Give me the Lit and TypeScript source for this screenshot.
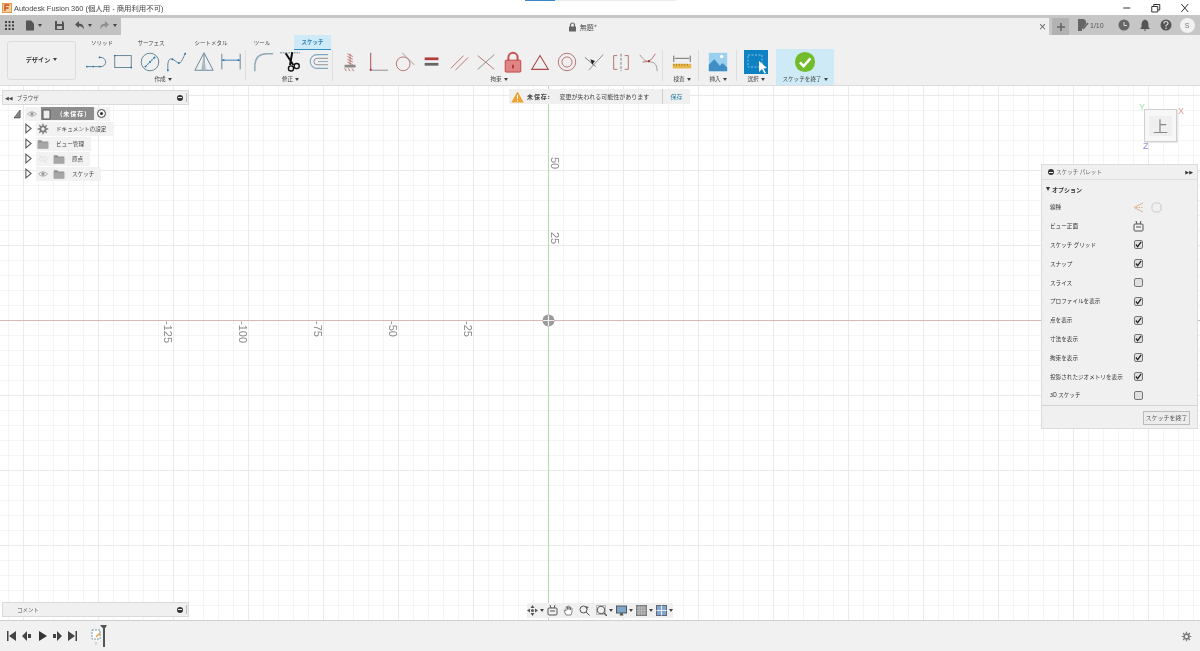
import { LitElement, html, css, svg } from "lit";
import { customElement } from "lit/decorators.js";

const B = "#5d7f92";
const D = "#2b78b5";
const R = "#b56a6a";
const dot = (x: number, y: number, c = D) => svg`<circle cx=${x} cy=${y} r="1" fill=${c} stroke="none"/>`;

const createIcons = [
  svg`<path d="M2 17H17.5a5 5 0 0 0 0-10H15" fill="none" stroke=${B}/>${dot(2, 17)}${dot(9, 17)}${dot(16, 17)}${dot(16, 7)}`,
  svg`<rect x="3" y="5" width="18" height="13" fill="none" stroke=${B}/>${dot(3, 5)}${dot(21, 18)}`,
  svg`<circle cx="12" cy="12" r="9.6" fill="none" stroke=${B}/><path d="M7 17L17 7" stroke=${D} stroke-width="1.2" stroke-dasharray="2 1"/>${dot(7, 17)}${dot(12, 12)}${dot(17, 7)}`,
  svg`<path d="M2 22V14Q3 7 7 9T13 13 18 9 21 2" fill="none" stroke=${B}/>${dot(2, 21)}${dot(7, 9)}${dot(14, 13)}${dot(21, 3)}`,
  svg`<path d="M12 2L2 21H22Z M12 2V21" fill="none" stroke=${B}/><path d="M12 2L14 21H9Z" fill="#a9b9c2"/>`,
  svg`<path d="M2 3V20M22 3V20" stroke=${B} fill="none"/><path d="M2 10H22" stroke=${D}/>${dot(4, 10)}${dot(20, 10)}`,
];
const modifyIcons = [
  svg`<path d="M2 22V15Q3 3 15 3H22" fill="none" stroke="#8fa9b8" stroke-width="1.6"/>`,
  svg`<path d="M0 2H22" stroke=${B} stroke-dasharray="2 1"/><path d="M6.200 2.500L14.500 15.300M13.400 1.400L10.900 15.300" stroke="#111" stroke-width="2.200"/><circle cx="12" cy="19" r="2.800" fill="none" stroke="#111" stroke-width="1.500"/><circle cx="18.200" cy="16.400" r="2.800" fill="none" stroke="#111" stroke-width="1.500"/>`,
  svg`<path d="M23 4H11a7.5 7.5 0 0 0 0 15H23" fill="none" stroke="#7fa9c0" stroke-width="1.2"/><path d="M23 8H11a3.5 3.5 0 0 0 0 7H23" fill="none" stroke="#8a8a8a"/><path d="M23 11.500H12" stroke="#7fa9c0"/>`,
];
const constraintIcons = [
  svg`<path d="M8 3L14 6M8 6L14 9M8 9L14 12M8 12L14 15M11 3V17" stroke=${R} fill="none" stroke-width=".9"/><rect x="5" y="15" width="12" height="3" fill="#8a8a8a"/><path d="M5 19L7 22M9 19L11 22M13 19L15 22" stroke=${R}/>`,
  svg`<path d="M4 2V21" stroke=${R} stroke-width="1.3"/><path d="M4 21H23" stroke="#a0a0a0" stroke-width="1.3"/><rect x="3" y="19.500" width="2" height="2" fill="#b33"/>`,
  svg`<circle cx="10" cy="14" r="7.500" fill="none" stroke=${R}/><path d="M9 2L22 15" stroke="#999"/>`,
  svg`<rect x="4" y="7" width="15" height="3" fill="#b23c3c"/><rect x="4" y="13" width="15" height="3" fill="#666"/>`,
  svg`<path d="M3 19L17 5M8 21L22 7" stroke=${R} fill="none"/>`,
  svg`<path d="M3 5L21 20" stroke=${R}/><path d="M3 20L21 4" stroke="#888"/>`,
  svg`<path d="M7 11V7a5 5 0 0 1 10 0V11" fill="none" stroke="#c85050" stroke-width="2.200"/><rect x="3.500" y="10" width="17" height="13" rx="1" fill="#e08585" stroke="#c04040"/><rect x="11" y="15" width="2" height="4" fill="#b33"/>`,
  svg`<path d="M12 5L21 20H3Z" fill="none" stroke="#a84a4a" stroke-width="1.2"/>`,
  svg`<circle cx="12" cy="12" r="9.500" fill="none" stroke=${R}/><circle cx="12" cy="12" r="5.500" fill="none" stroke=${R}/>`,
  svg`<path d="M6 21L22 4" stroke="#888"/><path d="M2 7L14 17" stroke="#777"/><path d="M8 9L13 11L10 15Z" fill="#222"/>`,
  svg`<path d="M8 5H4V20H8M16 5H20V20H16" fill="none" stroke=${R}/><path d="M12 3V22" stroke="#777" stroke-dasharray="3 1.500"/>`,
  svg`<path d="M3 4Q8 12 15 12T22 22" fill="none" stroke="#999"/><path d="M6 12Q10 12 13 11T20 3" fill="none" stroke=${R}/><circle cx="13" cy="11" r="1.300" fill="#a33"/>`,
];
const inspectIcon = svg`<path d="M3 5V12M21 5V12M4 8H20" stroke="#666"/><rect x="2" y="14" width="20" height="5" fill="#e8b84a"/><path d="M3 14V16M6 14V16M9 14V16M12 14V16M15 14V16M18 14V16" stroke="#9a7a20"/>`;
const insertIcon = svg`<rect x="2" y="2" width="20" height="20" fill="#9cd0ef"/><path d="M2 22V15L8 9L14 16L17 13L22 18V22Z" fill="#3f8fc6"/><circle cx="16" cy="6" r="1.800" fill="#fff"/>`;
const selectIcon = svg`<rect x="0" y="0" width="24" height="24" fill="#0f82c4"/><rect x="4" y="5" width="14" height="12" fill="none" stroke="#9fd4ef" stroke-dasharray="2 1.500" stroke-width=".8"/><path d="M15 11V22L18 19L20.500 23.500L22 23L19.500 18.500L23 18Z" fill="#fff"/>`;
const finishIcon = svg`<circle cx="12" cy="12" r="11" fill="#72bb2a"/><path d="M6.500 12.500L10.500 16.500L18 8" fill="none" stroke="#fff" stroke-width="2.800"/>`;

const ICON = (body: unknown, cls = "") => html`<svg class="ico ${cls}" viewBox="0 0 24 24">${body}</svg>`;

const caret = html`<span class="caret"></span>`;

const eye = svg`<path d="M2 8Q8 2 14 8Q8 14 2 8Z" fill="none" stroke="#999"/><circle cx="8" cy="8" r="2.200" fill="#999"/>`;
const eyeOff = svg`<path d="M2 8Q8 2 14 8Q8 14 2 8Z M3 3L13 13" fill="none" stroke="#ddd"/>`;
const folder = svg`<path d="M1 3H6L7 4.500H15V14H1Z" fill="#8f8f8f"/><rect x="1" y="6" width="14" height="8" fill="#a6a6a6"/>`;
const gear = svg`<circle cx="8" cy="8" r="3.500" fill="none" stroke="#7d7d7d" stroke-width="2.400"/><path d="M8 1V4M8 12V15M1 8H4M12 8H15M3 3L5 5M11 11L13 13M13 3L11 5M5 11L3 13" stroke="#7d7d7d" stroke-width="1.800"/>`;
const tri = html`<svg class="tri" viewBox="0 0 8 12"><path d="M1 1L7 6L1 11Z" fill="#fff" stroke="#555" stroke-width="1.200"/></svg>`;
const s16 = (b: unknown, cls = "i16") => html`<svg class=${cls} viewBox="0 0 16 16">${b}</svg>`;

const paletteRows: [string, boolean][] = [
  ["スケッチ グリッド", true],
  ["スナップ", true],
  ["スライス", false],
  ["プロファイルを表示", true],
  ["点を表示", true],
  ["寸法を表示", true],
  ["拘束を表示", true],
  ["投影されたジオメトリを表示", true],
  ["3D スケッチ", false],
];

const xLabels: [string, string][] = [["-125", "a"], ["-100", "b"], ["-75", "c"], ["-50", "d"], ["-25", "e"]];

@customElement("app-root")
export class AppRoot extends LitElement {
  static styles = css`
    :host { display: flex; flex-direction: column; width: 1200px; height: 651px; overflow: hidden; background: #fff;
      font-family: "Noto Sans CJK JP", "Liberation Sans", sans-serif; color: #333; font-size: 6px; filter: blur(.3px); }
    svg { display: block; }
    .title { height: 15px; flex: none; display: flex; align-items: center; position: relative; background: #fff; padding-left: 2px; }
    .progress { position: absolute; left: 525px; top: 0; width: 151px; height: 1px; background: #ececec; }
    .progress i { display: block; width: 30px; height: 1px; background: #3a86c4; }
    .logo { width: 10px; height: 10px; margin-right: 2px; }
    .title .t { font-size: 7.400px; color: #444; font-family: "Liberation Sans", "Noto Sans CJK JP", sans-serif; white-space: nowrap; }
    .win { margin-left: auto; display: flex; margin-right: 2px; }
    .win svg { width: 28.500px; height: 12px; }
    .tabs { height: 20px; flex: none; background: #c6c6c6; display: flex; align-items: stretch; }
    .qa { width: 121px; flex: none; display: flex; align-items: center; padding-left: 4px; box-sizing: border-box; background: #c2c2c2; }
    .qa svg { flex: none; width: 11px; height: 11px; }
    .qa .q1 { margin-right: 9px; }
    .qa .q3 { margin-left: 11.500px; }
    .qa .q4 { margin-left: 9px; }
    .qa .q5 { margin-left: 7px; opacity: .45; }
    .qa .caret { margin-left: 3px; }
    .doc { width: 928px; flex: none; margin-top: 3px; background: #f0f0f0; display: flex; align-items: center; justify-content: center; position: relative; font-size: 7px; color: #555; gap: 3px; padding-right: 5px; box-sizing: border-box; }
    .doc svg { width: 9px; height: 10px; }
    .close { position: absolute; right: 3px; top: 3px; font-size: 12px; line-height: 12px; color: #666; font-family: "Liberation Sans", sans-serif; }
    .rt { flex: 1; display: flex; align-items: center; background: #c6c6c6; position: relative; }
    .plus { width: 17px; height: 17px; margin: 3px 0 0 3px; background: #b2b2b2; display: flex; align-items: center; justify-content: center; align-self: flex-start; }
    .plus svg { width: 10px; height: 10px; }
    .rt .lim { margin-left: 8px; display: flex; align-items: center; gap: 1px; font-size: 7px; color: #555; font-family: "Liberation Sans", sans-serif; }
    .rt .lim svg { width: 12px; height: 12px; }
    .rt .ic { width: 12px; height: 12px; margin-left: 9px; }
    .rt .ic.first { margin-left: 14px; }
    .avatar { width: 15px; height: 15px; border-radius: 50%; background: #f2f2f2; margin-left: 8px; font-size: 7px; display: flex; align-items: center; justify-content: center; color: #777; font-family: "Liberation Sans", sans-serif; }

    .ribbon { height: 51px; flex: none; background: #f0f0f0; display: flex; border-bottom: 1px solid #dcdcdc; box-sizing: border-box; }
    .design { width: 69px; height: 39px; margin: 6px 6px 0 7px; flex: none; box-sizing: border-box; border: 1px solid #dcdcdc; border-radius: 3px; background: #f0f0f0; display: flex; align-items: center; justify-content: center; font-size: 6.200px; font-weight: 700; gap: 3px; color: #333; padding-bottom: 2px; }
    .rcol { flex: 1; display: flex; flex-direction: column; min-width: 0; }
    .rtabs { height: 15px; display: flex; flex: none; }
    .rtab { display: flex; align-items: center; justify-content: center; font-size: 5.500px; color: #444; box-sizing: border-box; }
    .w40 { width: 40px; } .w58 { width: 58px; } .w62 { width: 62px; }
    .rtab.on { width: 37px; margin-left: 12px; background: #cdeaf6; border-bottom: 1px solid #2f8fc0; color: #2a7fb5; font-weight: 700; }
    .groups { flex: 1; display: flex; min-height: 0; }
    .grp { display: flex; flex-direction: column; align-items: center; position: relative; padding-right: 2px; margin-right: 4px; }
    .grp::after { content: ""; position: absolute; right: 0; top: 0; bottom: 4px; width: 1px; background: #dedede; }
    .grp.nosep::after { display: none; }
    .grp.p4 { padding-right: 4px; }
    .cells { display: flex; height: 24px; align-items: center; }
    .cell { width: 27px; height: 24px; display: flex; align-items: center; justify-content: center; flex: none; }
    .cell.w30 { width: 30px; }
    .ico { width: 22px; height: 22px; overflow: visible; flex: none; }
    .lab { display: flex; align-items: center; gap: 2px; font-size: 5.600px; color: #444; height: 11px; line-height: 11px; white-space: nowrap; }
    .caret { display: inline-block; width: 0; height: 0; border-left: 2px solid transparent; border-right: 2px solid transparent; border-top: 3px solid #444; flex: none; }
    .finish { width: 58px; background: #cdeaf6; margin-left: 1px; display: flex; flex-direction: column; align-items: center; margin-top: -1px; padding-top: 1px; }
    .sel { margin-right: 2px; }
    .sel .ico { width: 24px; height: 24px; }

    .canvas { flex: 1; position: relative; min-height: 0; overflow: hidden; background-color: #fff;
      background-image:
        linear-gradient(to right, #eaeaea 1px, transparent 1px),
        linear-gradient(to bottom, #eaeaea 1px, transparent 1px),
        linear-gradient(to right, #f4f4f4 1px, transparent 1px),
        linear-gradient(to bottom, #f4f4f4 1px, transparent 1px);
      background-size: 75px 75px, 75px 75px, 15px 15px, 15px 15px;
      background-position: 23px 0, 0 9px, 8px 0, 0 9px; }
    .axis-y { position: absolute; left: 548px; top: 0; bottom: 0; width: 1px; background: #b4dcae; }
    .axis-x { position: absolute; left: 0; right: 0; top: 234px; height: 1px; background: #dcb6b6; }
    .origin { position: absolute; left: 542px; top: 228px; width: 13px; height: 13px; }
    .num { position: absolute; writing-mode: vertical-rl; font-family: "Liberation Sans", sans-serif; font-size: 11px; line-height: 11px; color: #8a8a8a; }
    .a { left: 162px; top: 235px; } .b { left: 237px; top: 235px; } .c { left: 312px; top: 235px; } .d { left: 387px; top: 235px; } .e { left: 462px; top: 235px; }
    .y50 { left: 549px; top: 71px; } .y25 { left: 549px; top: 146px; }
    .panel { position: absolute; left: 2px; width: 187px; height: 15px; background: #f0f0f0; border: 1px solid #dadada; box-sizing: border-box; display: flex; align-items: center; font-size: 5.500px; color: #555; }
    .panel::after { content: ""; width: 1px; height: 9px; background: #bbb; margin-right: 1px; }
    .p-b { top: 4px; } .p-c { bottom: 3px; }
    .panel .nav { font-size: 5px; margin: 0 4px 0 2px; color: #444; font-family: "DejaVu Sans", sans-serif; }
    .panel .cm { margin-left: 14px; }
    .pin { margin-left: auto; margin-right: 3px; width: 6px; height: 6px; border-radius: 50%; background: #333; position: relative; }
    .pin::after { content: ""; position: absolute; left: 1px; top: 2.500px; width: 4px; height: 1px; background: #eee; }
    .tree { position: absolute; left: 13px; top: 20px; display: flex; flex-direction: column; }
    .row { height: 15px; display: flex; align-items: center; }
    .row.child { padding-left: 11px; }
    .tw { width: 8px; display: flex; justify-content: center; margin-right: 4px; flex: none; }
    .tri { width: 7px; height: 11px; flex: none; }
    .chip { display: flex; align-items: center; height: 14px; background: #f2f2f2; font-size: 5.600px; color: #444; gap: 2px; }
    .i16 { width: 12px; height: 12px; flex: none; }
    .chip .slot { width: 14px; display: flex; justify-content: center; flex: none; }
    .chip .tx { margin: 0 7px 0 4px; white-space: nowrap; }
    .root { padding-right: 4px; gap: 0; }
    .rootbar { width: 53px; height: 13px; background: #8d8d8d; color: #fff; font-weight: 700; display: flex; align-items: center; gap: 7px; margin: 0 3px 0 2px; font-size: 6px; letter-spacing: 1px; }
    .rootbar svg { width: 12px; height: 12px; flex: none; }
    .radio { width: 9px; height: 9px; border: 1px solid #444; border-radius: 50%; box-sizing: border-box; display: flex; align-items: center; justify-content: center; }
    .radio i { width: 3px; height: 3px; background: #333; border-radius: 50%; }
    .cube { position: absolute; left: 1144px; top: 23px; width: 33px; height: 33px; box-sizing: border-box; border: 1px solid #cfcfcf; background: #f7f7f7; display: flex; align-items: center; justify-content: center; box-shadow: 1px 1px 1px #e8e8e8; }
    .cube span { width: 23px; height: 20px; background: #efefef; font-size: 15px; line-height: 20px; text-align: center; color: #888; }
    .ax { position: absolute; font-family: "Liberation Sans", sans-serif; font-size: 9px; line-height: 9px; }
    .ax-y { left: 1139px; top: 17px; color: #a8e0a8; }
    .ax-x { left: 1178px; top: 21px; color: #e59a9a; }
    .ax-z { left: 1143px; top: 56px; color: #8f8fd8; }
    .warn { position: absolute; left: 509px; top: 3px; width: 181px; height: 15px; background: #f0f0f0; display: flex; align-items: center; font-size: 6px; color: #444; }
    .warn svg { width: 13px; height: 12px; margin-left: 2px; flex: none; }
    .warn b { margin-left: 3px; letter-spacing: .9px; white-space: nowrap; }
    .warn .msg { margin-left: 9px; white-space: nowrap; }
    .warn .save { margin-left: auto; width: 28px; height: 15px; box-sizing: border-box; border-left: 1px solid #ccc; color: #2a7fa8; display: flex; align-items: center; justify-content: center; flex: none; }
    .palette { position: absolute; left: 1041px; top: 78px; width: 157px; height: 265px; box-sizing: border-box; background: #f0f0f0; border: 1px solid #dcdcdc; display: flex; flex-direction: column; color: #333; font-size: 5.600px; }
    .ph { height: 14px; flex: none; display: flex; align-items: center; padding: 0 4px 0 6px; border-bottom: 1px solid #dedede; color: #666; gap: 0; }
    .ph .pin { margin: 0 2px 0 0; flex: none; }
    .ph .ff { margin-left: auto; font-size: 5px; font-family: "DejaVu Sans", sans-serif; color: #333; }
    .po { height: 18px; flex: none; display: flex; align-items: center; padding-left: 4px; font-weight: 700; gap: 2px; font-size: 6px; color: #333; box-sizing: border-box; }
    .po i { width: 0; height: 0; border-left: 2.500px solid transparent; border-right: 2.500px solid transparent; border-top: 4px solid #333; }
    .pr { height: 18.800px; display: flex; align-items: center; padding-left: 8px; flex: none; }
    .pr .nm { width: 83px; white-space: nowrap; flex: none; }
    .pr .v { display: flex; gap: 7px; align-items: center; }
    .pr .v svg { width: 11px; height: 11px; }
    .chk { width: 9px; height: 9px; box-sizing: border-box; border: 1px solid #777; border-radius: 2px; background: #e0e0e0; display: flex; align-items: center; justify-content: center; margin-left: 1px; }
    .chk svg { width: 7px !important; height: 7px !important; }
    .pf { margin-top: auto; height: 24px; flex: none; border-top: 1px solid #d4d4d4; display: flex; align-items: center; justify-content: flex-end; padding-right: 7px; }
    .pf span { width: 47px; height: 14px; box-sizing: border-box; border: 1px solid #bbb; background: #ececec; display: flex; align-items: center; justify-content: center; font-size: 6px; color: #555; white-space: nowrap; }
    .navbar { position: absolute; left: 527px; top: 517px; width: 146px; height: 15px; background: #f0f0f0; display: flex; align-items: center; box-sizing: border-box; }
    .navbar svg { width: 11px; height: 11px; flex: none; margin-left: 3px; }
    .navbar svg.n0 { margin-left: 0; }
    .navbar svg.n5 { margin-left: 5px; }
    .navbar svg.n6 { margin-left: 6px; }
    .navbar .caret { margin-left: 2px; }
    .timeline { height: 31px; flex: none; box-sizing: border-box; border-top: 1px solid #cfcfcf; background: #f1f1f1; display: flex; align-items: center; padding: 0 8px 0 7px; }
    .timeline .tb { width: 9px; height: 10px; margin-right: 6.250px; flex: none; }
    .feat { width: 16px; height: 22px; margin-left: 8px; flex: none; }
    .tgear { margin-left: auto; width: 11px; height: 11px; }
  `;

  render() {
    const group = (icons: unknown[], label: string) => html`<div class="grp">
      <div class="cells">${icons.map((i) => html`<div class="cell">${ICON(i)}</div>`)}</div>
      <div class="lab">${label}${caret}</div>
    </div>`;
    const check = svg`<path d="M1 4L3 6.500L7 1" fill="none" stroke="#222" stroke-width="1.400"/>`;
    return html`
      <div class="title">
        <div class="progress"><i></i></div>
        <svg class="logo" viewBox="0 0 10 10"><rect x=".5" y=".5" width="9" height="9" fill="#f6cfa0" stroke="#e39a4a"/><path d="M3 8V2H7.500M3 5H6.500" fill="none" stroke="#c8501e" stroke-width="1.400"/></svg>
        <span class="t">Autodesk Fusion 360 (個人用 - 商用利用不可)</span>
        <div class="win">
          <svg viewBox="0 0 28 12"><path d="M10 6H17" stroke="#333"/></svg>
          <svg viewBox="0 0 28 12"><path d="M10.500 4.500H16.500V10H10.500Z M12.500 4.500V2.500H18.500V8H16.500" fill="none" stroke="#333"/></svg>
          <svg viewBox="0 0 28 12"><path d="M11 2L18 10M18 2L11 10" stroke="#333"/></svg>
        </div>
      </div>
      <div class="tabs">
        <div class="qa">
          <svg class="q1" viewBox="0 0 11 11"><path d="M1 1H3V3H1ZM4.500 1H6.500V3H4.500ZM8 1H10V3H8ZM1 4.500H3V6.500H1ZM4.500 4.500H6.500V6.500H4.500ZM8 4.500H10V6.500H8ZM1 8H3V10H1ZM4.500 8H6.500V10H4.500ZM8 8H10V10H8Z" fill="#444"/></svg>
          <svg class="q2" viewBox="0 0 11 11"><path d="M2 .5H7L10 3.500V10.500H2Z" fill="#555"/></svg>${caret}
          <svg class="q3" viewBox="0 0 11 11"><path d="M1 1H8.500L10 2.500V10H1Z" fill="#555"/><rect x="3" y="1" width="5" height="3" fill="#c2c2c2"/><rect x="3" y="6" width="5" height="3" fill="#c2c2c2"/></svg>
          <svg class="q4" viewBox="0 0 11 11"><path d="M1 4.500L5 1V3.500Q10 3.500 10 9.500Q8.500 6 5 6V8Z" fill="#555"/></svg>${caret}
          <svg class="q5" viewBox="0 0 11 11"><path d="M10 4.500L6 1V3.500Q1 3.500 1 9.500Q2.500 6 6 6V8Z" fill="#555"/></svg>${caret}
        </div>
        <div class="doc">
          <svg viewBox="0 0 9 10"><path d="M2.500 5V3a2 2 0 0 1 4 0V5" fill="none" stroke="#666" stroke-width="1.200"/><rect x="1" y="4.500" width="7" height="5" rx=".5" fill="#666"/></svg>
          <span>無題*</span>
          <span class="close">×</span>
        </div>
        <div class="rt">
          <div class="plus"><svg viewBox="0 0 10 10"><path d="M5 1V9M1 5H9" stroke="#666" stroke-width="1.600"/></svg></div>
          <div class="lim"><svg viewBox="0 0 12 12"><path d="M1 0H7L9 2V5L5 10V12H1Z" fill="#666"/><path d="M6 10L11 4" stroke="#666" stroke-width="1.600"/></svg>1/10</div>
          <svg class="ic first" viewBox="0 0 12 12"><circle cx="6" cy="6" r="5.500" fill="#666"/><path d="M6 3V6.500H9" stroke="#ddd" fill="none"/></svg>
          <svg class="ic" viewBox="0 0 12 12"><path d="M6 .5Q9.500 1.500 9.500 5.500V8L11 10H1L2.500 8V5.500Q2.500 1.500 6 .5ZM4.500 10.500H7.500L6 12Z" fill="#555"/></svg>
          <svg class="ic" viewBox="0 0 12 12"><circle cx="6" cy="6" r="5.500" fill="#555"/><path d="M4 4.500Q4 2.500 6 2.500T8 4.500Q8 5.500 6 6.500V7.500M6 8.500V10" stroke="#ddd" fill="none" stroke-width="1.200"/></svg>
          <div class="avatar">S</div>
        </div>
      </div>
      <div class="ribbon">
        <div class="design">デザイン ${caret}</div>
        <div class="rcol">
          <div class="rtabs">
            <div class="rtab w40">ソリッド</div><div class="rtab w58">サーフェス</div><div class="rtab w62">シートメタル</div><div class="rtab w40">ツール</div><div class="rtab on">スケッチ</div>
          </div>
          <div class="groups">
            ${group(createIcons, "作成")}
            ${group(modifyIcons, "修正")}
            ${group(constraintIcons, "拘束")}
            <div class="grp"><div class="cells"><div class="cell w30">${ICON(inspectIcon)}</div></div><div class="lab">検査${caret}</div></div>
            <div class="grp p4"><div class="cells"><div class="cell w30">${ICON(insertIcon)}</div></div><div class="lab">挿入${caret}</div></div>
            <div class="grp nosep sel"><div class="cells"><div class="cell w30">${ICON(selectIcon)}</div></div><div class="lab">選択${caret}</div></div>
            <div class="finish"><div class="cells"><div class="cell">${ICON(finishIcon)}</div></div><div class="lab">スケッチを終了${caret}</div></div>
          </div>
        </div>
      </div>
      <div class="canvas">
        <div class="axis-y"></div>
        <div class="axis-x"></div>
        <svg class="origin" viewBox="0 0 13 13"><circle cx="6.500" cy="6.500" r="6" fill="#9a9a9a"/><path d="M6.500 1V12M1 6.500H12" stroke="#eee" stroke-width="1.200"/></svg>
        ${xLabels.map(([t, c]) => html`<span class="num ${c}">${t}</span>`)}
        <span class="num y50">50</span>
        <span class="num y25">25</span>

        <div class="panel p-b"><span class="nav">◀◀</span>ブラウザ<span class="pin"></span></div>
        <div class="tree">
          <div class="row">
            <div class="tw"><svg class="tri" viewBox="0 0 8 12"><path d="M7 2V11H0Z" fill="#888" stroke="#444" stroke-width=".8"/></svg></div>
            <div class="chip root">
              <div class="slot">${s16(eye)}</div>
              <div class="rootbar"><svg viewBox="0 0 12 12"><path d="M2 2H9V11H2Z" fill="#eee" stroke="#555"/></svg>(未保存)</div>
              <div class="radio"><i></i></div>
            </div>
          </div>
          <div class="row child"><div class="tw">${tri}</div><div class="chip"><div class="slot">${s16(gear)}</div><span class="tx">ドキュメントの設定</span></div></div>
          <div class="row child"><div class="tw">${tri}</div><div class="chip"><div class="slot">${s16(folder)}</div><span class="tx">ビュー管理</span></div></div>
          <div class="row child"><div class="tw">${tri}</div><div class="chip"><div class="slot">${s16(eyeOff)}</div><div class="slot">${s16(folder)}</div><span class="tx">原点</span></div></div>
          <div class="row child"><div class="tw">${tri}</div><div class="chip"><div class="slot">${s16(eye)}</div><div class="slot">${s16(folder)}</div><span class="tx">スケッチ</span></div></div>
        </div>
        <div class="panel p-c"><span class="cm">コメント</span><span class="pin"></span></div>

        <div class="warn">
          <svg viewBox="0 0 13 12"><path d="M6.500 .5L12.800 11.500H.2Z" fill="#eda32f"/><path d="M6.500 4V8M6.500 9V10.500" stroke="#fff"/></svg>
          <b>未保存:</b><span class="msg">変更が失われる可能性があります</span><span class="save">保存</span>
        </div>

        <span class="ax ax-y">Y</span><span class="ax ax-x">X</span><span class="ax ax-z">Z</span>
        <div class="cube"><span>上</span></div>

        <div class="palette">
          <div class="ph"><span class="pin"></span>スケッチ パレット<span class="ff">▶▶</span></div>
          <div class="po"><i></i>オプション</div>
          <div class="pr"><span class="nm">線種</span><div class="v">
            <svg viewBox="0 0 11 11"><path d="M10 1L1 5.500L10 10" fill="none" stroke="#e0b090"/><path d="M3 5.500H10" stroke="#e0b090" stroke-dasharray="1.500 1"/></svg>
            <svg viewBox="0 0 11 11"><path d="M3 1H8L10 3V8L8 10H3L1 8V3Z" fill="none" stroke="#ccc"/></svg>
          </div></div>
          <div class="pr"><span class="nm">ビュー正面</span><div class="v"><svg viewBox="0 0 11 11"><rect x="1" y="3" width="9" height="7" rx="1" fill="none" stroke="#555"/><path d="M3 0L4 3M8 0L7 3M3 6H8" stroke="#555"/></svg></div></div>
          ${paletteRows.map(([n, c]) => html`<div class="pr"><span class="nm">${n}</span><div class="v"><span class="chk">${c ? html`<svg viewBox="0 0 8 8">${check}</svg>` : ""}</span></div></div>`)}
          <div class="pf"><span>スケッチを終了</span></div>
        </div>

        <div class="navbar">
          <svg class="n0" viewBox="0 0 11 11"><path d="M5.500 0L7.500 3H3.500ZM5.500 11L3.500 8H7.500ZM0 5.500L3 3.500V7.500ZM11 5.500L8 7.500V3.500Z" fill="#555"/><circle cx="5.500" cy="5.500" r="1.500" fill="#555"/></svg>${caret}
          <svg viewBox="0 0 11 11"><rect x="1" y="3" width="9" height="7" rx="1" fill="none" stroke="#555"/><path d="M3 0L4 3M8 0L7 3M3 6H8" stroke="#555"/></svg>
          <svg class="n5" viewBox="0 0 11 11"><path d="M3 10L1 5.500Q1.500 4.500 3 6V2Q4 1 4.500 2V4.500V1.500Q5.500 .5 6 1.500V4.500V2Q7 1 7.500 2V5V3Q8.500 2.500 9 3.500V7L8 10Z" fill="#fff" stroke="#555" stroke-width=".7"/></svg>
          <svg class="n5" viewBox="0 0 11 11"><circle cx="4.500" cy="4.500" r="3.500" fill="none" stroke="#555"/><path d="M7 7L10.500 10.500" stroke="#555"/><path d="M8 1V4M6.500 2.500H9.500" stroke="#555" stroke-width=".8"/></svg>
          <svg class="n6" viewBox="0 0 11 11"><circle cx="5" cy="5" r="3.800" fill="none" stroke="#555"/><path d="M8 8L11 11" stroke="#555" stroke-width="1.400"/><rect x=".5" y=".5" width="9" height="9" fill="none" stroke="#888" stroke-dasharray="1 1"/></svg>${caret}
          <svg viewBox="0 0 11 11"><rect x=".5" y="1" width="10" height="7" fill="#7ea6c8" stroke="#555"/><path d="M3.500 10.500H7.500L6.500 8H4.500Z" fill="#555"/></svg>${caret}
          <svg viewBox="0 0 11 11"><rect x=".5" y=".5" width="10" height="10" fill="#999" stroke="#777"/><path d="M3 .5V10.500M5.500 .5V10.500M8 .5V10.500M.5 3H10.500M.5 5.500H10.500M.5 8H10.500" stroke="#ccc" stroke-width=".5"/></svg>${caret}
          <svg viewBox="0 0 11 11"><rect x=".5" y=".5" width="10" height="10" fill="#7ea6d0" stroke="#667"/><path d="M5.500 .5V10.500M.5 5.500H10.500" stroke="#eee"/></svg>${caret}
        </div>
      </div>
      <div class="timeline">
        <svg class="tb" viewBox="0 0 9 10"><path d="M0 0H1.500V10H0ZM9 0V10L2 5Z" fill="#444"/></svg>
        <svg class="tb" viewBox="0 0 9 10"><path d="M5 0V10L0 5ZM6 3H9V7H6Z" fill="#444"/></svg>
        <svg class="tb" viewBox="0 0 9 10"><path d="M1 0L9 5L1 10Z" fill="#333"/></svg>
        <svg class="tb" viewBox="0 0 9 10"><path d="M4 0V10L9 5ZM0 3H3V7H0Z" fill="#444"/></svg>
        <svg class="tb" viewBox="0 0 9 10"><path d="M7.500 0H9V10H7.500ZM0 0V10L7 5Z" fill="#444"/></svg>
        <svg class="feat" viewBox="0 0 16 22"><rect x="1" y="5" width="8" height="9" fill="#fff" stroke="#7a9aaa" stroke-dasharray="2 1"/><path d="M5 12L9 8" stroke="#e8a040" stroke-width="1.400"/><path d="M5 17V20" stroke="#bbb"/><path d="M9 0H16L14 3.500V22H12V3.500Z" fill="#555"/></svg>
        <svg class="tgear" viewBox="0 0 16 16">${gear}</svg>
      </div>
    `;
  }
}
